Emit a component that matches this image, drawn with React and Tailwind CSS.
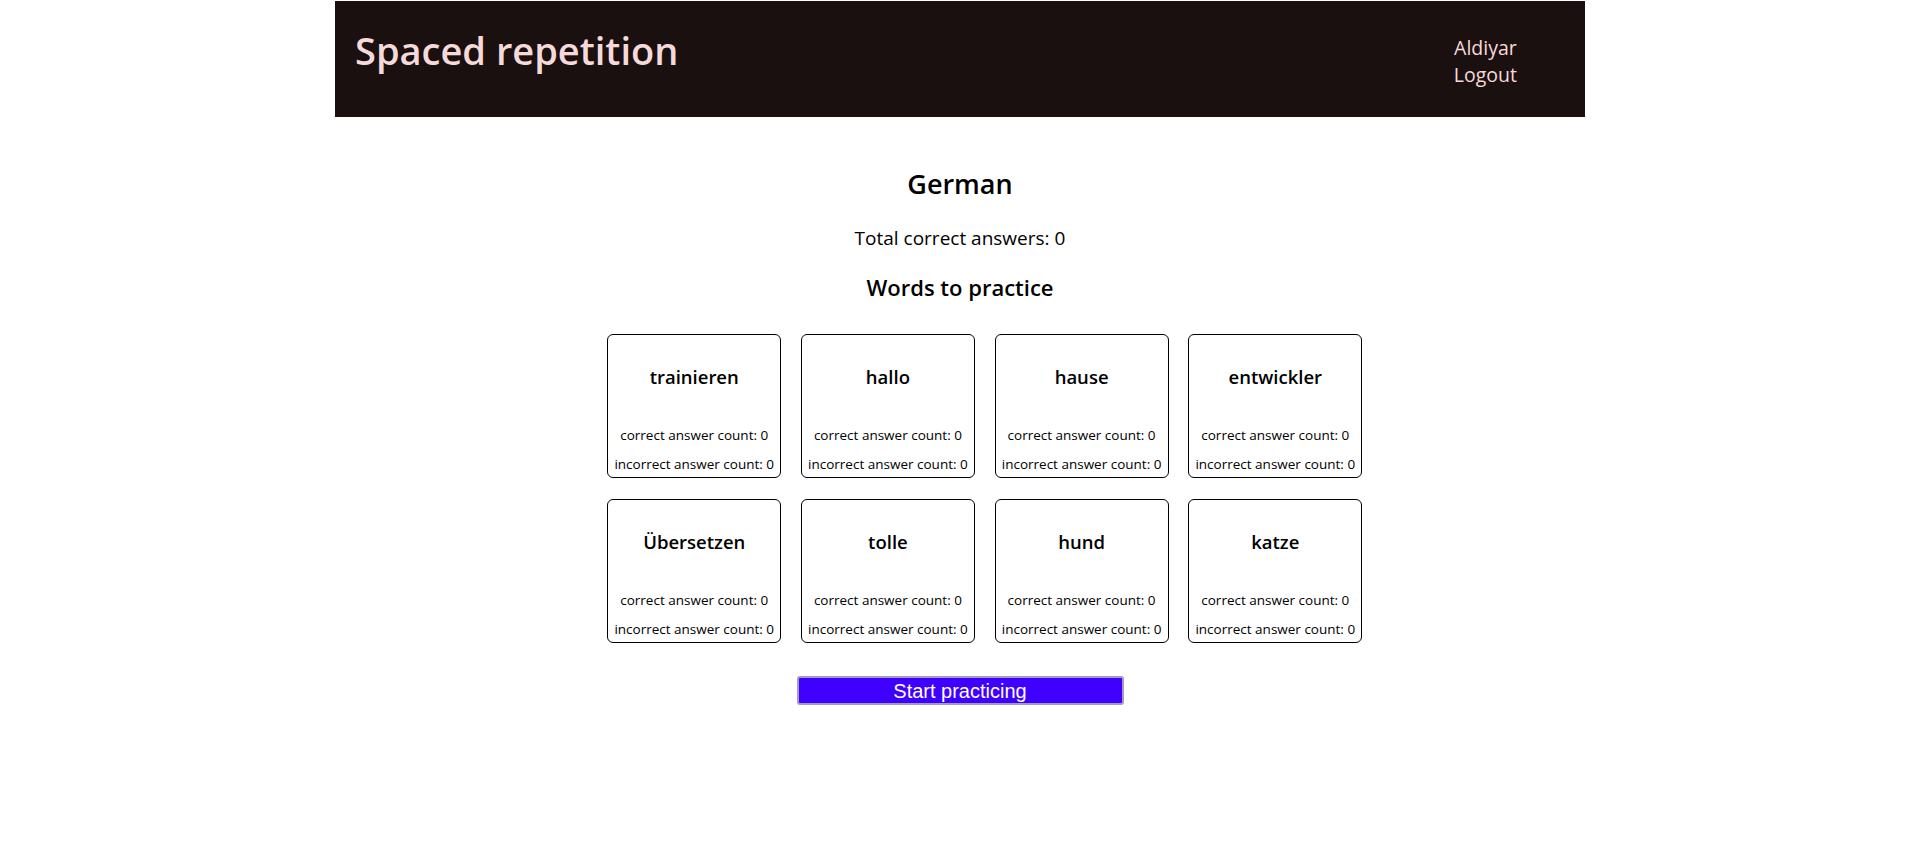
const words = [
  "trainieren",
  "hallo",
  "hause",
  "entwickler",
  "Übersetzen",
  "tolle",
  "hund",
  "katze",
];

function WordCard({ word }) {
  return (
    <li className="w-[174px] h-[144px] border border-black rounded-[6px] flex flex-col items-center">
      <h3 className="mt-[29px] h-[26px] leading-[26px] text-[18.5px] font-semibold text-black">{word}</h3>
      <p className="mt-[37px] h-[16px] leading-[16px] text-[13.5px] whitespace-nowrap">correct answer count: 0</p>
      <p className="mt-[13px] h-[16px] leading-[16px] text-[13.5px] whitespace-nowrap">incorrect answer count: 0</p>
    </li>
  );
}

export default function App() {
  return (
    <div className="min-h-[856px] pt-px bg-white font-['Open_Sans',sans-serif] text-black">
      {/* Top bar */}
      <header className="mx-auto w-[1250px] h-[116px] bg-[#1b1010] flex justify-between">
        <h1 className="ml-[20px] mt-[24px] h-[50px] leading-[50px] text-[38px] font-semibold text-[#f6dada]">
          Spaced repetition
        </h1>
        <div className="mr-[68px] mt-[33px] flex flex-col items-center text-[19.5px] leading-[27px] text-[#f6dada]">
          <span>Aldiyar</span>
          <span>Logout</span>
        </div>
      </header>

      <main className="flex flex-col items-center">
        <h2 className="mt-[47px] h-[40px] leading-[40px] text-[27px] font-semibold">German</h2>
        <p className="mt-[21px] leading-[26px] text-[19px]">Total correct answers: 0</p>
        <h2 className="mt-[21px] leading-[30px] text-[22px] font-semibold">Words to practice</h2>

        <ul className="mt-[32px] w-[1250px] pl-[49.5px] flex flex-wrap justify-center">
          <div className="grid grid-cols-4 gap-x-[19.7px] gap-y-[21px]">
            {words.map((w) => (
              <WordCard key={w} word={w} />
            ))}
          </div>
        </ul>

        <button className="mt-[33px] w-[327px] h-[29px] bg-[#4000ff] border-2 border-[#a29cc0] rounded-[3px] text-white text-[20px] leading-[24px] font-['Liberation_Sans',Arial,sans-serif]">
          Start practicing
        </button>
      </main>
    </div>
  );
}
